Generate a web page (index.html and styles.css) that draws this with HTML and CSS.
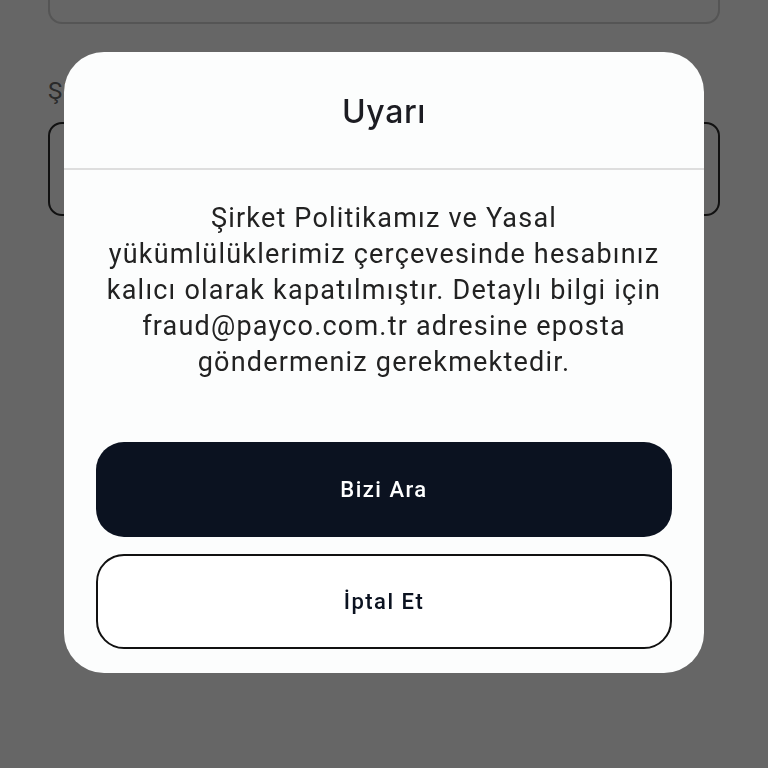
FILE: index.html
```html
<!DOCTYPE html>
<html lang="tr">
<head>
  <meta charset="UTF-8">
  <meta name="viewport" content="width=device-width, initial-scale=1.0">
  <title>Uyarı</title>
  <link rel="stylesheet" href="styles.css">
</head>
<body>

  <!-- Form behind the dialog -->
  <div class="form">
    <div class="field field-top"></div>
    <label class="field-label">Şirket Adı</label>
    <div class="field field-active"></div>
  </div>

  <!-- Alert dialog -->
  <div class="dialog">
    <div class="dialog-header">Uyarı</div>
    <div class="dialog-body">
      <p class="dialog-text">
        Şirket Politikamız ve Yasal<br>
        yükümlülüklerimiz çerçevesinde hesabınız<br>
        kalıcı olarak kapatılmıştır. Detaylı bilgi için<br>
        fraud@payco.com.tr adresine eposta<br>
        göndermeniz gerekmektedir.
      </p>
      <div class="dialog-actions">
        <button class="btn btn-primary">Bizi Ara</button>
        <button class="btn btn-outline">İptal Et</button>
      </div>
    </div>
  </div>

</body>
</html>
```

FILE: styles.css
```css
body {
  font-family: Roboto, 'Liberation Sans', sans-serif;
  background-color: #666666;
  margin: 0;
  padding: 0;
  height: 768px;
  overflow: hidden;
}

/* Form behind the overlay */
.form {
  padding: 0 48px;
  display: flex;
  flex-direction: column;
}

.field {
  height: 90px;
  border-radius: 14px;
  border: 2px solid #555;
  box-sizing: border-box;
}

.field-top {
  margin-top: -66px;
}

.field-label {
  margin-top: 52px;
  font-size: 24px;
  line-height: 30px;
  color: #2a2a2a;
  letter-spacing: 1px;
}

.field-active {
  margin-top: 16px;
  height: 94px;
  border-color: #111;
}

/* Dialog */
.dialog {
  position: fixed;
  top: 52px;
  left: 64px;
  right: 64px;
  background-color: #fcfdfd;
  border-radius: 40px;
  overflow: hidden;
}

.dialog-header {
  height: 118px;
  display: flex;
  align-items: center;
  justify-content: center;
  padding-top: 2px;
  box-sizing: border-box;
  font-family: Inter, 'Open Sans', sans-serif;
  font-weight: 500;
  font-size: 32px;
  color: #1c1c22;
  border-bottom: 2px solid #dedede;
  letter-spacing: 0.6px;
}

.dialog-body {
  padding: 30px 32px 24px;
}

.dialog-text {
  margin: 0;
  text-align: center;
  font-size: 27px;
  line-height: 36px;
  letter-spacing: 1.2px;
  color: #222;
}

.dialog-actions {
  margin-top: 62px;
  display: flex;
  flex-direction: column;
  gap: 17px;
}

.btn {
  height: 95px;
  border-radius: 28px;
  font-family: Roboto, sans-serif;
  font-weight: 500;
  font-size: 22px;
  letter-spacing: 1.5px;
  cursor: pointer;
}

.btn-primary {
  background-color: #0b1220;
  color: #fff;
  border: none;
}

.btn-outline {
  background-color: #fff;
  color: #0b1220;
  border: 2px solid #111;
}
```
